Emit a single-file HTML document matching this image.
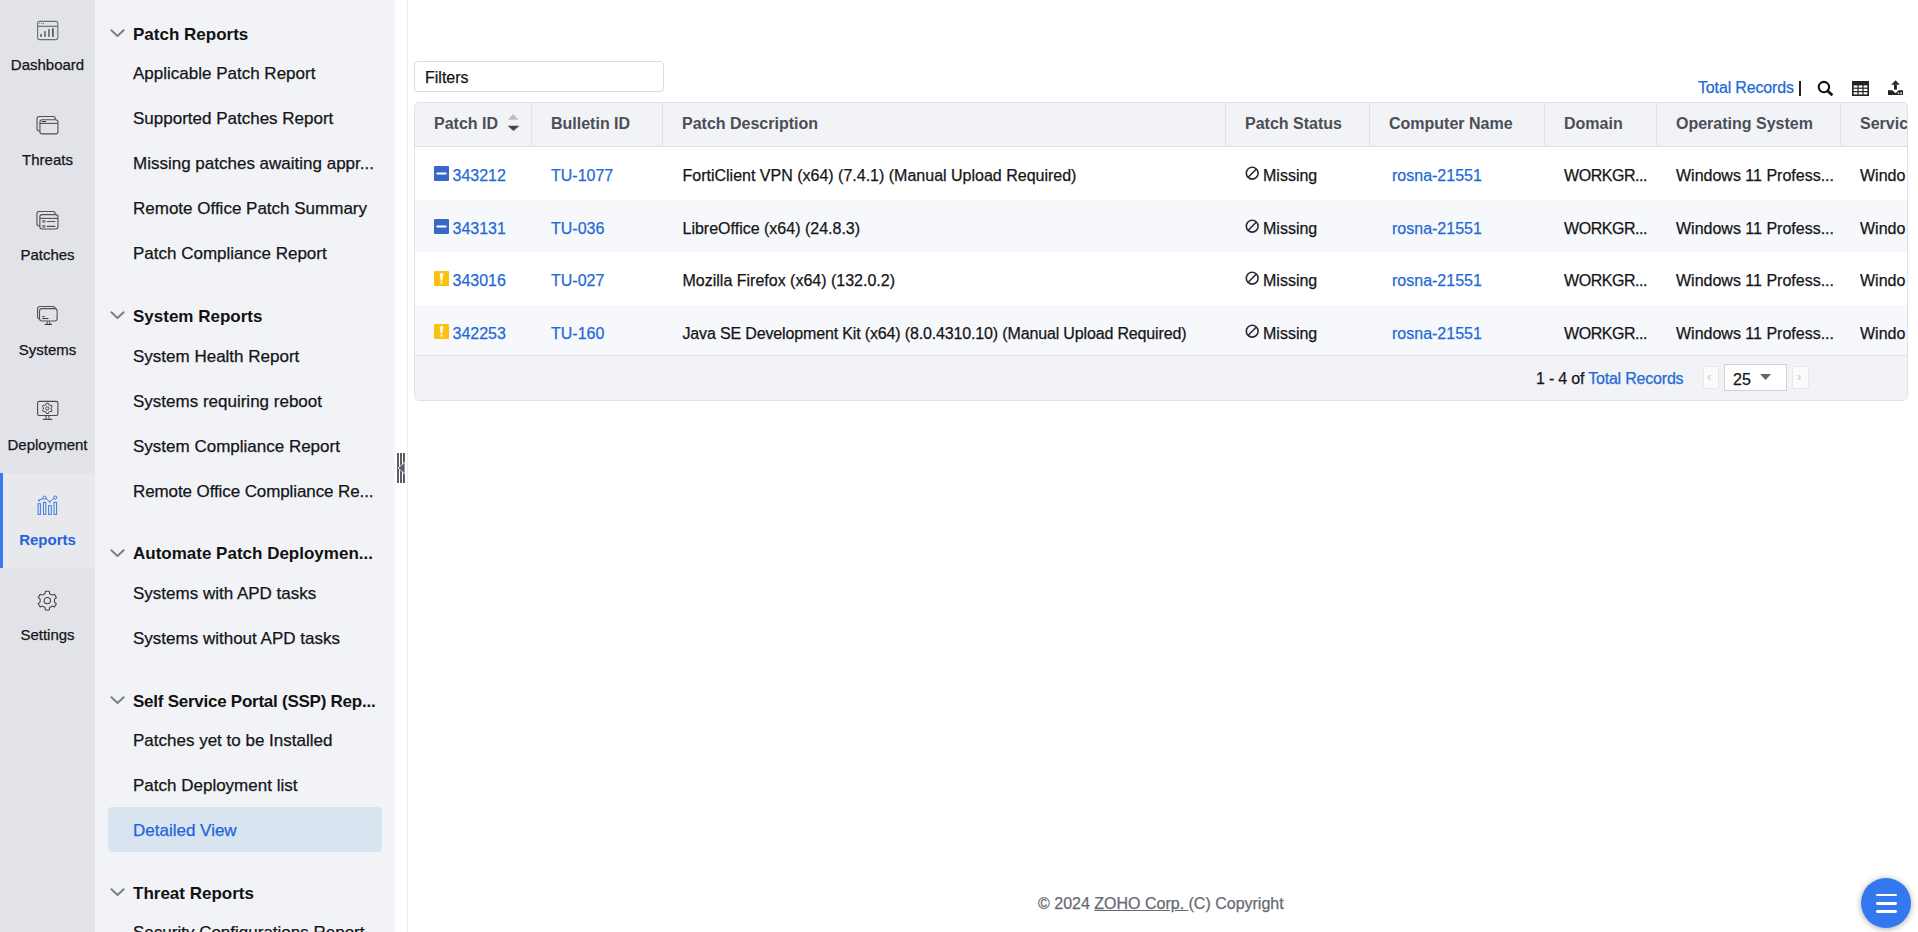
<!DOCTYPE html>
<html><head><meta charset="utf-8">
<style>
*{box-sizing:border-box;margin:0;padding:0}
html,body{width:1918px;height:932px;overflow:hidden;background:#fff;font-family:"Liberation Sans",sans-serif;color:#141518}
.a{position:absolute;white-space:nowrap}
#nav{position:absolute;left:0;top:0;width:95px;height:932px;background:#e2e3e8}
.nl{position:absolute;left:0;width:95px;text-align:center;font-size:15px;line-height:15px;color:#141518;-webkit-text-stroke:0.25px currentColor}
.ni{position:absolute;left:36px;width:24px;height:22px}
#navact{position:absolute;left:0;top:473px;width:95px;height:95px;background:#e8e9ed}
#navbar{position:absolute;left:0;top:473px;width:3px;height:95px;background:#3a78f2}
#side{position:absolute;left:95px;top:0;width:300px;height:932px;background:#f2f3f7;overflow:hidden}
.sh{position:absolute;left:38px;font-size:17px;line-height:17px;font-weight:700;color:#111}
.si{position:absolute;left:38px;font-size:17px;line-height:17px;color:#141518;-webkit-text-stroke:0.25px currentColor}
.chev{position:absolute;left:15px;width:15px;height:9px;overflow:visible}
#main{position:absolute;left:0;top:0;width:1918px;height:932px}
.t16{font-size:16px;line-height:16px;-webkit-text-stroke:0.25px currentColor}
.lnk{color:#1f6ad6}
.hd{position:absolute;top:115.5px;font-size:16px;line-height:16px;font-weight:700;color:#4b4e56}
.cd{position:absolute;top:102px;width:1px;height:44px;background:#e2e3e8}
.row{position:absolute;left:415px;width:1492px}
.cell{position:absolute;font-size:16px;line-height:16px;white-space:nowrap;-webkit-text-stroke:0.25px currentColor}
</style></head><body>

<!-- left nav -->
<div id="nav">
  <div id="navact"></div><div id="navbar"></div>
  <div class="nl" style="top:57px">Dashboard</div>
  <div class="nl" style="top:152px">Threats</div>
  <div class="nl" style="top:247px">Patches</div>
  <div class="nl" style="top:342px">Systems</div>
  <div class="nl" style="top:437px">Deployment</div>
  <div class="nl" style="top:532px;color:#2264dc;font-weight:700;-webkit-text-stroke:0">Reports</div>
  <div class="nl" style="top:627px">Settings</div>
</div>


<!-- nav icons -->
<svg class="a" style="left:35px;top:19px" width="26" height="24" viewBox="0 0 26 24">
  <rect x="2.6" y="2.4" width="20.2" height="18.2" rx="2" stroke="#6b6e74" stroke-width="1.1" fill="none"/>
  <line x1="2.6" y1="7.3" x2="22.8" y2="7.3" stroke="#6b6e74" stroke-width="1.2"/>
  <circle cx="4.6" cy="4.5" r="0.55" fill="#6b6e74"/><circle cx="6.5" cy="4.5" r="0.55" fill="#6b6e74"/><circle cx="8.4" cy="4.5" r="0.6" fill="#55575c"/>
  <rect x="5.1" y="15" width="1.8" height="2.9" fill="#6b6e74"/>
  <rect x="9.2" y="12.1" width="1.7" height="5.8" fill="#6b6e74"/>
  <rect x="13.1" y="10.1" width="1.7" height="7.8" fill="#6b6e74"/>
  <rect x="17" y="9.2" width="1.8" height="8.7" fill="#5d5f64"/>
</svg>
<svg class="a" style="left:35px;top:114px" width="26" height="24" viewBox="0 0 26 24">
  <rect x="2.05" y="2.55" width="18.15" height="14.4" rx="2.2" stroke="#505257" stroke-width="1.1" fill="none"/>
  <rect x="4.95" y="5.8" width="18" height="14.1" rx="2.2" fill="#e2e3e8" stroke="#505257" stroke-width="1.1"/>
  <line x1="4.95" y1="9.4" x2="22.95" y2="9.4" stroke="#505257" stroke-width="1.1"/>
  <line x1="7.4" y1="7.5" x2="10.6" y2="7.5" stroke="#333" stroke-width="1.2" stroke-linecap="round"/>
</svg>
<svg class="a" style="left:35px;top:209px" width="26" height="24" viewBox="0 0 26 24">
  <rect x="1.95" y="2.55" width="18.25" height="14.4" rx="2.2" stroke="#505257" stroke-width="1.1" fill="none"/>
  <rect x="4.85" y="5.65" width="18.1" height="14.4" rx="2.2" fill="#e2e3e8" stroke="#505257" stroke-width="1.1"/>
  <line x1="4.85" y1="9.4" x2="22.95" y2="9.4" stroke="#505257" stroke-width="1.1"/>
  <rect x="7.6" y="11.6" width="2.5" height="1.6" rx="0.5" stroke="#505257" stroke-width="1" fill="none"/>
  <rect x="7.6" y="16.6" width="2.5" height="1.6" rx="0.5" stroke="#505257" stroke-width="1" fill="none"/>
  <line x1="12.3" y1="12.5" x2="19.9" y2="12.5" stroke="#505257" stroke-width="1.1" stroke-linecap="round"/>
  <line x1="12.3" y1="17.4" x2="19.9" y2="17.4" stroke="#505257" stroke-width="1.1" stroke-linecap="round"/>
</svg>
<svg class="a" style="left:35px;top:304px" width="26" height="24" viewBox="0 0 26 24">
  <rect x="2.6" y="2.55" width="17.6" height="12.3" rx="2.4" stroke="#505257" stroke-width="1.1" fill="none"/>
  <rect x="4.55" y="4.65" width="17.6" height="12.3" rx="2.4" fill="#e2e3e8" stroke="#505257" stroke-width="1.1"/>
  <line x1="12.4" y1="17.3" x2="12.4" y2="20" stroke="#505257" stroke-width="0.9"/>
  <line x1="14.6" y1="17.3" x2="14.6" y2="20" stroke="#505257" stroke-width="0.9"/>
  <line x1="10.2" y1="20.3" x2="16.6" y2="20.3" stroke="#3e4045" stroke-width="1.2" stroke-linecap="round"/>
  <line x1="7.2" y1="12.5" x2="9.9" y2="12.5" stroke="#505257" stroke-width="1"/>
  <line x1="7.2" y1="14.5" x2="13.5" y2="14.5" stroke="#3e4045" stroke-width="1.1"/>
</svg>
<svg class="a" style="left:35px;top:399px" width="26" height="24" viewBox="0 0 26 24">
  <rect x="2.6" y="2.4" width="20.3" height="14.1" rx="1.6" fill="none" stroke="#484a50" stroke-width="1.1"/>
  <line x1="11" y1="17" x2="11" y2="19.8" stroke="#484a50" stroke-width="1"/>
  <line x1="13.9" y1="17" x2="13.9" y2="19.8" stroke="#484a50" stroke-width="1"/>
  <line x1="8.4" y1="20.4" x2="16.6" y2="20.4" stroke="#484a50" stroke-width="1.2" stroke-linecap="round"/>
  <path d="M11.06 5.70 L11.22 4.31 L13.38 4.31 L13.54 5.70 L14.88 6.47 L16.16 5.92 L17.25 7.79 L16.12 8.63 L16.12 10.17 L17.25 11.01 L16.16 12.88 L14.88 12.33 L13.54 13.10 L13.38 14.49 L11.22 14.49 L11.06 13.10 L9.72 12.33 L8.44 12.88 L7.35 11.01 L8.48 10.17 L8.48 8.63 L7.35 7.79 L8.44 5.92 L9.72 6.47 Z" fill="none" stroke="#484a50" stroke-width="1" stroke-linejoin="round"/>
  <circle cx="12.3" cy="9.4" r="1.6" fill="none" stroke="#484a50" stroke-width="1"/>
</svg>
<svg class="a" style="left:35px;top:494px" width="26" height="24" viewBox="0 0 26 24">
  <g stroke="#3f78dc" stroke-width="1" fill="none">
  <rect x="3.1" y="9.7" width="2.3" height="10.7"/>
  <rect x="8.4" y="8.4" width="2.4" height="12"/>
  <rect x="13.6" y="11.7" width="2.7" height="8.7"/>
  <rect x="19" y="8.3" width="2.6" height="12.1"/>
  <path d="M3.8 6.4 L8 4.5 M11.1 4.4 L14.75 7.8 L18.7 4.5"/>
  <circle cx="9.6" cy="3.7" r="1.6"/>
  <circle cx="20.2" cy="3.6" r="1.6"/>
  </g>
  <circle cx="3.9" cy="6.5" r="1" fill="#3f78dc"/>
  <path d="M13.6 7.6 L15.9 7.6 L14.75 9.2 Z" fill="#3f78dc"/>
</svg>
<svg class="a" style="left:35px;top:589px" width="26" height="24" viewBox="0 0 26 24">
  <path d="M9.97 4.68 L10.30 2.21 L14.30 2.21 L14.63 4.68 L17.13 6.12 L19.43 5.18 L21.43 8.63 L19.46 10.16 L19.46 13.04 L21.43 14.57 L19.43 18.02 L17.13 17.08 L14.63 18.52 L14.30 20.99 L10.30 20.99 L9.97 18.52 L7.47 17.08 L5.17 18.02 L3.17 14.57 L5.14 13.04 L5.14 10.16 L3.17 8.63 L5.17 5.18 L7.47 6.12 Z" fill="none" stroke="#3e4045" stroke-width="1.05" stroke-linejoin="round"/>
  <circle cx="12.3" cy="11.6" r="3.2" fill="none" stroke="#3e4045" stroke-width="1.05"/>
</svg>

<!-- sub sidebar -->
<div id="side">
  <svg class="chev" style="top:29px" viewBox="0 0 15 9"><path d="M1.4 1.3 L7.5 6.9 L13.6 1.3" fill="none" stroke="#7b7e86" stroke-width="2" stroke-linecap="round" stroke-linejoin="round"/></svg>
  <div class="sh" style="top:26px">Patch Reports</div>
  <div class="si" style="top:65px">Applicable Patch Report</div>
  <div class="si" style="top:110px">Supported Patches Report</div>
  <div class="si" style="top:155px">Missing patches awaiting appr...</div>
  <div class="si" style="top:200px">Remote Office Patch Summary</div>
  <div class="si" style="top:245px">Patch Compliance Report</div>

  <svg class="chev" style="top:311px" viewBox="0 0 15 9"><path d="M1.4 1.3 L7.5 6.9 L13.6 1.3" fill="none" stroke="#7b7e86" stroke-width="2" stroke-linecap="round" stroke-linejoin="round"/></svg>
  <div class="sh" style="top:308px">System Reports</div>
  <div class="si" style="top:348px">System Health Report</div>
  <div class="si" style="top:393px">Systems requiring reboot</div>
  <div class="si" style="top:438px">System Compliance Report</div>
  <div class="si" style="top:483px;letter-spacing:-0.1px">Remote Office Compliance Re...</div>

  <svg class="chev" style="top:549px" viewBox="0 0 15 9"><path d="M1.4 1.3 L7.5 6.9 L13.6 1.3" fill="none" stroke="#7b7e86" stroke-width="2" stroke-linecap="round" stroke-linejoin="round"/></svg>
  <div class="sh" style="top:545px">Automate Patch Deploymen...</div>
  <div class="si" style="top:585px">Systems with APD tasks</div>
  <div class="si" style="top:630px">Systems without APD tasks</div>

  <svg class="chev" style="top:696px" viewBox="0 0 15 9"><path d="M1.4 1.3 L7.5 6.9 L13.6 1.3" fill="none" stroke="#7b7e86" stroke-width="2" stroke-linecap="round" stroke-linejoin="round"/></svg>
  <div class="sh" style="top:693px;letter-spacing:-0.25px">Self Service Portal (SSP) Rep...</div>
  <div class="si" style="top:732px">Patches yet to be Installed</div>
  <div class="si" style="top:777px">Patch Deployment list</div>
  <div style="position:absolute;left:13px;top:807px;width:274px;height:44.5px;background:#d9e4f1;border-radius:4px"></div>
  <div class="si" style="top:822px;color:#2264dc">Detailed View</div>

  <svg class="chev" style="top:888px" viewBox="0 0 15 9"><path d="M1.4 1.3 L7.5 6.9 L13.6 1.3" fill="none" stroke="#7b7e86" stroke-width="2" stroke-linecap="round" stroke-linejoin="round"/></svg>
  <div class="sh" style="top:885px">Threat Reports</div>
  <div class="si" style="top:924px">Security Configurations Report</div>
</div>

<!-- collapse handle -->
<svg class="a" style="left:396px;top:452px" width="10" height="32" viewBox="0 0 10 32">
  <rect x="1" y="1" width="2" height="30" fill="#5a5d66"/>
  <rect x="4" y="1" width="2" height="30" fill="#5a5d66"/>
  <rect x="7" y="1" width="2" height="30" fill="#5a5d66"/>
  <path d="M9 10 L2 16 L9 22 Z" fill="#5a5d66" stroke="#fff" stroke-width="0.8"/>
</svg>
<div class="a" style="left:407px;top:0;width:1px;height:932px;background:#e9eaef"></div>

<!-- filters -->
<div class="a" style="left:414px;top:61px;width:250px;height:31px;border:1px solid #d8dadf;border-radius:4px;background:#fff"></div>
<div class="a t16" style="left:425px;top:69.5px">Filters</div>

<!-- toolbar -->
<div class="a t16 lnk" style="left:1698px;top:80px;letter-spacing:-0.15px">Total Records</div>
<div class="a" style="left:1799px;top:81px;width:1.8px;height:15px;background:#222"></div>


<!-- toolbar icons -->
<svg class="a" style="left:1816px;top:80px" width="18" height="18" viewBox="0 0 18 18">
  <circle cx="7.9" cy="7.05" r="5.2" fill="none" stroke="#111" stroke-width="2.1"/>
  <path d="M11.5 10.8 L16.4 15.3" stroke="#111" stroke-width="2.7"/>
</svg>
<svg class="a" style="left:1852px;top:81px" width="17" height="15" viewBox="0 0 17 15">
  <rect x="0" y="0" width="17" height="15" fill="#222"/>
  <g fill="#fff">
    <rect x="1.6" y="4.4" width="3.8" height="2.2"/><rect x="6.6" y="4.4" width="3.8" height="2.2"/><rect x="11.6" y="4.4" width="3.8" height="2.2"/>
    <rect x="1.6" y="7.8" width="3.8" height="2.2"/><rect x="6.6" y="7.8" width="3.8" height="2.2"/><rect x="11.6" y="7.8" width="3.8" height="2.2"/>
    <rect x="1.6" y="11.2" width="3.8" height="2.2"/><rect x="6.6" y="11.2" width="3.8" height="2.2"/><rect x="11.6" y="11.2" width="3.8" height="2.2"/>
  </g>
</svg>
<svg class="a" style="left:1887px;top:80px" width="17" height="17" viewBox="0 0 17 17">
  <path d="M4.1 4.7 L8.6 0.3 L12.9 4.7 Z" fill="#2b2b2b"/>
  <rect x="7" y="4.5" width="2.9" height="5.1" fill="#222"/>
  <path d="M1 10.2 L5.4 10.2 L8.5 13.2 L11.6 10.2 L16 10.2 L16 15.1 L1 15.1 Z" fill="#222"/>
  <rect x="10.6" y="12.3" width="1.5" height="1.8" fill="#ccc"/><rect x="13.2" y="12.3" width="1.8" height="1.8" fill="#ddd"/>
</svg>

<!-- table -->
<div class="a" style="left:414px;top:102px;width:1494px;height:299px;border:1px solid #e1e2e7;border-radius:5px;overflow:hidden;background:#fff">
  <div class="a" style="left:0;top:0;width:1494px;height:44px;background:#f2f3f6;border-bottom:1px solid #dfe0e5"></div>
  <div class="a" style="left:0;top:97px;width:1494px;height:52px;background:#f7f8fb"></div>
  <div class="a" style="left:0;top:202px;width:1494px;height:50px;background:#f7f8fb"></div>
  <div class="a" style="left:0;top:252px;width:1494px;height:46px;background:#f2f3f6;border-top:1px solid #dfe0e5"></div>
</div>
<div class="cd" style="left:531px"></div>
<div class="cd" style="left:662px"></div>
<div class="cd" style="left:1225px"></div>
<div class="cd" style="left:1369px"></div>
<div class="cd" style="left:1544px"></div>
<div class="cd" style="left:1656px"></div>
<div class="cd" style="left:1840px"></div>

<div class="hd" style="left:434px">Patch ID</div>
<svg class="a" style="left:507px;top:113px" width="13" height="19" viewBox="0 0 13 19">
  <path d="M6.2 1.2 L10.9 6.6 L1.5 6.6 Z" fill="#b9babe" stroke="#b9babe" stroke-width="0.4" stroke-linejoin="round"/>
  <path d="M1.1 12.9 L11.9 12.9 L6.5 17.8 Z" fill="#444" stroke="#444" stroke-width="0.4" stroke-linejoin="round"/>
</svg>
<div class="hd" style="left:551px">Bulletin ID</div>
<div class="hd" style="left:682px">Patch Description</div>
<div class="hd" style="left:1245px">Patch Status</div>
<div class="hd" style="left:1389px">Computer Name</div>
<div class="hd" style="left:1564px">Domain</div>
<div class="hd" style="left:1676px">Operating System</div>
<div class="a" style="left:1860px;top:102px;width:47px;height:44px;overflow:hidden"><div class="hd" style="left:0;top:13.5px">Services</div></div>
<svg class="a" style="left:434px;top:166px" width="15" height="15" viewBox="0 0 15 15"><rect width="15" height="15" rx="1" fill="#3a68c8"/><rect x="2.3" y="6.5" width="10.4" height="2" rx="1" fill="#fff"/></svg>
<div class="cell lnk" style="left:452.5px;top:168px">343212</div>
<div class="cell lnk" style="left:551px;top:168px">TU-1077</div>
<div class="cell" style="left:682.5px;top:168px">FortiClient VPN (x64) (7.4.1) (Manual Upload Required)</div>
<svg class="a" style="left:1245px;top:166px" width="15" height="15" viewBox="0 0 15 15"><circle cx="7.2" cy="7.2" r="5.9" fill="none" stroke="#2a2c31" stroke-width="1.6"/><path d="M3.2 11.2 L11.2 3.2" stroke="#2a2c31" stroke-width="1.6"/></svg>
<div class="cell" style="left:1263px;top:168px">Missing</div>
<div class="cell lnk" style="left:1392px;top:168px">rosna-21551</div>
<div class="cell" style="left:1564px;top:168px;letter-spacing:-0.45px">WORKGR...</div>
<div class="cell" style="left:1676px;top:168px">Windows 11 Profess...</div>
<div class="a" style="left:1860px;top:165px;width:47px;height:22px;overflow:hidden"><div class="cell" style="left:0;top:3px">Windo</div></div>
<svg class="a" style="left:434px;top:219px" width="15" height="15" viewBox="0 0 15 15"><rect width="15" height="15" rx="1" fill="#3a68c8"/><rect x="2.3" y="6.5" width="10.4" height="2" rx="1" fill="#fff"/></svg>
<div class="cell lnk" style="left:452.5px;top:221px">343131</div>
<div class="cell lnk" style="left:551px;top:221px">TU-036</div>
<div class="cell" style="left:682.5px;top:221px">LibreOffice (x64) (24.8.3)</div>
<svg class="a" style="left:1245px;top:219px" width="15" height="15" viewBox="0 0 15 15"><circle cx="7.2" cy="7.2" r="5.9" fill="none" stroke="#2a2c31" stroke-width="1.6"/><path d="M3.2 11.2 L11.2 3.2" stroke="#2a2c31" stroke-width="1.6"/></svg>
<div class="cell" style="left:1263px;top:221px">Missing</div>
<div class="cell lnk" style="left:1392px;top:221px">rosna-21551</div>
<div class="cell" style="left:1564px;top:221px;letter-spacing:-0.45px">WORKGR...</div>
<div class="cell" style="left:1676px;top:221px">Windows 11 Profess...</div>
<div class="a" style="left:1860px;top:218px;width:47px;height:22px;overflow:hidden"><div class="cell" style="left:0;top:3px">Windo</div></div>
<svg class="a" style="left:434px;top:271px" width="15" height="15" viewBox="0 0 15 15"><rect width="15" height="15" rx="1" fill="#fdc00d"/><path d="M5.6 2.8 Q7.5 1.2 9.4 2.8 L8.3 9.6 L6.7 9.6 Z" fill="#fff"/><circle cx="7.5" cy="11.6" r="1.15" fill="#fff"/></svg>
<div class="cell lnk" style="left:452.5px;top:273px">343016</div>
<div class="cell lnk" style="left:551px;top:273px">TU-027</div>
<div class="cell" style="left:682.5px;top:273px">Mozilla Firefox (x64) (132.0.2)</div>
<svg class="a" style="left:1245px;top:271px" width="15" height="15" viewBox="0 0 15 15"><circle cx="7.2" cy="7.2" r="5.9" fill="none" stroke="#2a2c31" stroke-width="1.6"/><path d="M3.2 11.2 L11.2 3.2" stroke="#2a2c31" stroke-width="1.6"/></svg>
<div class="cell" style="left:1263px;top:273px">Missing</div>
<div class="cell lnk" style="left:1392px;top:273px">rosna-21551</div>
<div class="cell" style="left:1564px;top:273px;letter-spacing:-0.45px">WORKGR...</div>
<div class="cell" style="left:1676px;top:273px">Windows 11 Profess...</div>
<div class="a" style="left:1860px;top:270px;width:47px;height:22px;overflow:hidden"><div class="cell" style="left:0;top:3px">Windo</div></div>
<svg class="a" style="left:434px;top:324px" width="15" height="15" viewBox="0 0 15 15"><rect width="15" height="15" rx="1" fill="#fdc00d"/><path d="M5.6 2.8 Q7.5 1.2 9.4 2.8 L8.3 9.6 L6.7 9.6 Z" fill="#fff"/><circle cx="7.5" cy="11.6" r="1.15" fill="#fff"/></svg>
<div class="cell lnk" style="left:452.5px;top:326px">342253</div>
<div class="cell lnk" style="left:551px;top:326px">TU-160</div>
<div class="cell" style="left:682.5px;top:326px;letter-spacing:-0.15px">Java SE Development Kit (x64) (8.0.4310.10) (Manual Upload Required)</div>
<svg class="a" style="left:1245px;top:324px" width="15" height="15" viewBox="0 0 15 15"><circle cx="7.2" cy="7.2" r="5.9" fill="none" stroke="#2a2c31" stroke-width="1.6"/><path d="M3.2 11.2 L11.2 3.2" stroke="#2a2c31" stroke-width="1.6"/></svg>
<div class="cell" style="left:1263px;top:326px">Missing</div>
<div class="cell lnk" style="left:1392px;top:326px">rosna-21551</div>
<div class="cell" style="left:1564px;top:326px;letter-spacing:-0.45px">WORKGR...</div>
<div class="cell" style="left:1676px;top:326px">Windows 11 Profess...</div>
<div class="a" style="left:1860px;top:323px;width:47px;height:22px;overflow:hidden"><div class="cell" style="left:0;top:3px">Windo</div></div>

<!-- pagination -->
<div class="cell" style="left:1536px;top:371px;letter-spacing:-0.2px">1 - 4 of <span class="lnk">Total Records</span></div>
<div class="a" style="left:1703px;top:366px;width:16px;height:23px;border:1px solid #e6e7eb;border-radius:3px;background:#fbfbfc"></div>
<div class="a" style="left:1707px;top:369px;font-size:13px;line-height:16px;color:#c5c7cc">&#8249;</div>
<div class="a" style="left:1724px;top:364px;width:63px;height:27px;border:1px solid #cfd1d6;background:#fff"></div>
<div class="cell" style="left:1733px;top:372px">25</div>
<svg class="a" style="left:1759px;top:373px" width="13" height="8" viewBox="0 0 13 8"><path d="M1 1 L12 1 L6.5 7 Z" fill="#666"/></svg>
<div class="a" style="left:1792px;top:366px;width:17px;height:23px;border:1px solid #e6e7eb;border-radius:3px;background:#fbfbfc"></div>
<div class="a" style="left:1797px;top:369px;font-size:13px;line-height:16px;color:#c5c7cc">&#8250;</div>

<!-- footer -->
<div class="a t16" style="left:1038px;top:896px;color:#676a72">&copy; 2024 <span style="text-decoration:underline">ZOHO Corp. </span>(C) Copyright</div>

<!-- fab -->
<div class="a" style="left:1861px;top:878px;width:50px;height:50px;border-radius:50%;background:#3478f0;box-shadow:0 1px 6px rgba(0,0,0,0.35)"></div>
<div class="a" style="left:1876px;top:893.6px;width:21px;height:2.8px;border-radius:1.4px;background:#fff"></div>
<div class="a" style="left:1876px;top:902px;width:21px;height:2.8px;border-radius:1.4px;background:#fff"></div>
<div class="a" style="left:1876px;top:910px;width:21px;height:2.8px;border-radius:1.4px;background:#fff"></div>

</body></html>
